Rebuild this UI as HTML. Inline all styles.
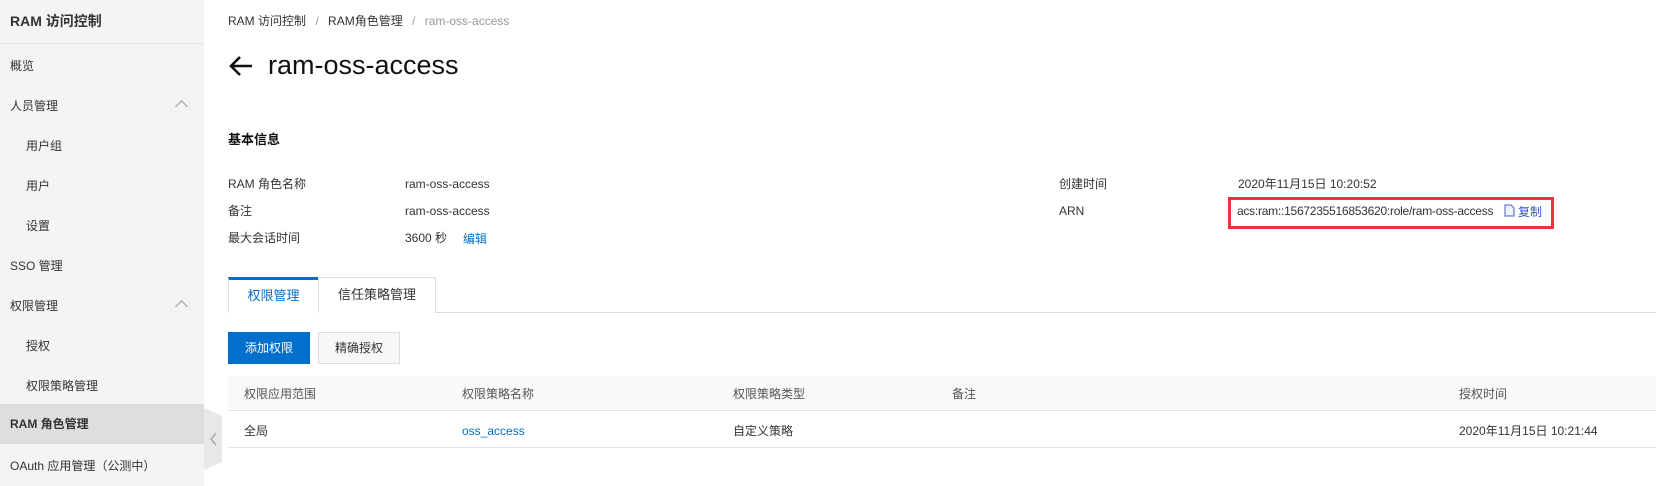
<!DOCTYPE html>
<html><head><meta charset="utf-8"><style>
*{margin:0;padding:0;box-sizing:border-box}
body{width:1656px;height:486px;overflow:hidden;background:#fff;font-family:"Liberation Sans","Noto Sans CJK SC",sans-serif;font-size:12px;color:#333;position:relative}
.abs{position:absolute;white-space:nowrap;line-height:16px}
.side{position:absolute;left:0;top:0;width:204px;height:486px;background:#f4f4f4}
.mi{position:absolute;left:0;width:204px;height:40px;line-height:40px;padding-left:10px;font-size:12px;color:#333}
.sub{padding-left:26px}
.chev{position:absolute;right:18px;top:16px;width:9px;height:9px;border-left:1.3px solid #999;border-top:1.3px solid #999;transform:rotate(45deg)}
.lbl{font-size:12px;color:#333}
.blue{color:#0070cc}
</style></head><body>
<div class="side">
<div class="abs" style="left:10px;top:10px;font-size:14px;font-weight:bold;color:#333;line-height:22px">RAM 访问控制</div>
<div class="abs" style="left:0;top:43px;width:204px;height:1px;background:#e3e3e3"></div>
<div class="mi" style="top:46px">概览</div>
<div class="mi" style="top:86px">人员管理<span class="chev"></span></div>
<div class="mi sub" style="top:126px">用户组</div>
<div class="mi sub" style="top:166px">用户</div>
<div class="mi sub" style="top:206px">设置</div>
<div class="mi" style="top:246px">SSO 管理</div>
<div class="mi" style="top:286px">权限管理<span class="chev"></span></div>
<div class="mi sub" style="top:326px">授权</div>
<div class="mi sub" style="top:366px">权限策略管理</div>
<div class="mi" style="top:404px;background:#dedede;font-weight:bold">RAM 角色管理</div>
<div class="mi" style="top:446px">OAuth 应用管理（公测中）</div>
</div>
<svg class="abs" style="left:204px;top:406px" width="20" height="66"><polygon points="0,2 18,10 18,56 0,64" fill="#e8e8e8"/><polyline points="12,27 7,33 12,39" fill="none" stroke="#aaa" stroke-width="1.5"/></svg>

<div class="abs" style="left:228px;top:13px;color:#333">RAM 访问控制 <span style="color:#999;margin:0 6px">/</span> RAM角色管理 <span style="color:#999;margin:0 6px">/</span> <span style="color:#999">ram-oss-access</span></div>
<svg class="abs" style="left:228px;top:55px" width="26" height="22"><path d="M24 11H3M12 2L3 11l9 9" fill="none" stroke="#111" stroke-width="2.6"/></svg>
<div class="abs" style="left:268px;top:49px;font-size:27px;color:#111;line-height:32px">ram-oss-access</div>
<div class="abs" style="left:228px;top:131px;font-size:13px;font-weight:bold;color:#111;line-height:18px">基本信息</div>

<div class="abs lbl" style="left:228px;top:176px">RAM 角色名称</div>
<div class="abs lbl" style="left:405px;top:176px">ram-oss-access</div>
<div class="abs lbl" style="left:228px;top:203px">备注</div>
<div class="abs lbl" style="left:405px;top:203px">ram-oss-access</div>
<div class="abs lbl" style="left:228px;top:230px">最大会话时间</div>
<div class="abs lbl" style="left:405px;top:230px">3600 秒</div>
<div class="abs lbl blue" style="left:463px;top:231px">编辑</div>
<div class="abs lbl" style="left:1059px;top:176px">创建时间</div>
<div class="abs lbl" style="left:1238px;top:176px">2020年11月15日 10:20:52</div>
<div class="abs lbl" style="left:1059px;top:203px">ARN</div>
<div class="abs" style="left:1228px;top:197px;width:326px;height:32px;border:3px solid #f0303a"></div>
<div class="abs lbl" style="left:1237px;top:203px;letter-spacing:-0.25px">acs:ram::1567235516853620:role/ram-oss-access</div>
<svg class="abs" style="left:1503px;top:204px" width="12" height="13"><path d="M2 1h6l3 3v8H2z" fill="#eef2fb" stroke="#6d7fd0" stroke-width="1.3"/></svg>
<div class="abs lbl blue" style="left:1518px;top:204px;color:#3355cc">复制</div>

<div class="abs" style="left:228px;top:312px;width:1428px;height:1px;background:#ddd"></div>
<div class="abs" style="left:228px;top:277px;width:90px;height:36px;background:#fff;border-top:3px solid #0070cc;border-left:1px solid #ddd;text-align:center;line-height:32px;font-size:13px;color:#0070cc">权限管理</div>
<div class="abs" style="left:318px;top:277px;width:118px;height:36px;background:#fff;border:1px solid #ddd;border-bottom:none;text-align:center;line-height:34px;font-size:13px;color:#333">信任策略管理</div>

<div class="abs" style="left:228px;top:332px;width:82px;height:32px;background:#0070cc;color:#fff;text-align:center;line-height:32px">添加权限</div>
<div class="abs" style="left:318px;top:332px;width:82px;height:32px;background:#f7f7f7;border:1px solid #ddd;text-align:center;line-height:30px;color:#333">精确授权</div>

<div class="abs" style="left:228px;top:376px;width:1428px;height:35px;background:#f9f9f9;border-bottom:1px solid #e5e5e5"></div>
<div class="abs" style="left:228px;top:447px;width:1428px;height:1px;background:#e5e5e5"></div>
<div class="abs lbl" style="left:244px;top:386px;color:#555">权限应用范围</div>
<div class="abs lbl" style="left:462px;top:386px;color:#555">权限策略名称</div>
<div class="abs lbl" style="left:733px;top:386px;color:#555">权限策略类型</div>
<div class="abs lbl" style="left:952px;top:386px;color:#555">备注</div>
<div class="abs lbl" style="left:1459px;top:386px;color:#555">授权时间</div>
<div class="abs lbl" style="left:244px;top:423px">全局</div>
<div class="abs lbl blue" style="left:462px;top:423px">oss_access</div>
<div class="abs lbl" style="left:733px;top:423px">自定义策略</div>
<div class="abs lbl" style="left:1459px;top:423px">2020年11月15日 10:21:44</div>
</body></html>
